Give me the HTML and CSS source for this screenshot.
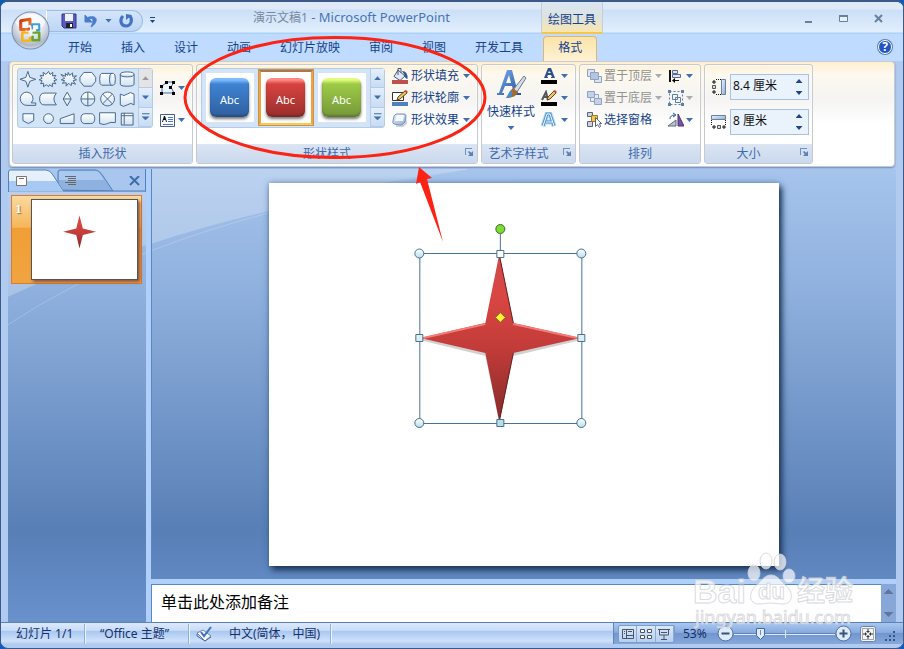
FILE: index.html
```html
<!DOCTYPE html>
<html lang="zh-CN">
<head>
<meta charset="utf-8">
<title>演示文稿1 - Microsoft PowerPoint</title>
<link rel="stylesheet" href="styles.css">
</head>
<body>
<svg class="defs" aria-hidden="true">
  <defs>
    <linearGradient id="shapeFill" x1="0" y1="0" x2="0" y2="1"><stop offset="0" stop-color="#fff"/><stop offset="1" stop-color="#d3e3f3"/></linearGradient>
    <linearGradient id="steel" x1="0" y1="0" x2="1" y2="1"><stop offset="0" stop-color="#eef5fd"/><stop offset="1" stop-color="#8aa9d3"/></linearGradient>
    <linearGradient id="redStar" x1="0" y1="0" x2="0" y2="1"><stop offset="0" stop-color="#cf4a4a"/><stop offset=".25" stop-color="#d94643"/><stop offset=".55" stop-color="#c33c39"/><stop offset="1" stop-color="#852a2a"/></linearGradient>
    <radialGradient id="orb" cx=".5" cy=".3" r=".75"><stop offset="0" stop-color="#fff"/><stop offset=".5" stop-color="#dfe3ec"/><stop offset=".8" stop-color="#b0b8c8"/><stop offset="1" stop-color="#e8edf5"/></radialGradient>
    <linearGradient id="handle" x1="0" y1="0" x2="0" y2="1"><stop offset="0" stop-color="#fff"/><stop offset="1" stop-color="#b4dfea"/></linearGradient>
    <linearGradient id="letter" x1="0" y1="0" x2="1" y2="1"><stop offset="0" stop-color="#7fb0ea"/><stop offset="1" stop-color="#1f4f9f"/></linearGradient>
    <linearGradient id="ember" x1="0" y1="0" x2="1" y2="1"><stop offset="0" stop-color="#c8380f"/><stop offset="1" stop-color="#f58a3c"/></linearGradient>
  </defs>
</svg>
<div class="window">
  <header class="top">
    <button class="office" aria-label="Office 按钮">
      <svg viewBox="0 0 38 38"><circle cx="19" cy="19" r="18" fill="url(#orb)" stroke="#7f8fab"/><ellipse cx="19" cy="11" rx="14" ry="8" fill="#fff" opacity=".65"/>
        <g fill="none" stroke-linejoin="round"><path d="M17 18h-7.500V9.500l9-1.500v6" stroke="url(#ember)" stroke-width="3"/><path d="M20.500 18v-5h7v5.500h-3" stroke="#3f9fdc" stroke-width="2"/><path d="M17 21h-6v8h7.500v-4" stroke="#f6b51d" stroke-width="2.500"/><path d="M21 21h6.500v7.500H21V24" stroke="#69a52b" stroke-width="2.500"/><path d="M19.500 15v9M14 19.500h10" stroke="#fff"/><path d="M17.500 16v2h-2" stroke="#e85a1c" stroke-width="2"/></g></svg>
    </button>
    <div class="titlebar">
      <div class="title-left">
        <div class="qat">
          <button aria-label="保存"><svg width="16" height="16"><path d="M1 1h14v14H3l-2-2z" fill="#5a5bc0" stroke="#33348f"/><path d="M4 1h8v7H4z" fill="#eef1fa"/><path d="M5 10h7v5H5z" fill="#222"/><path d="M9 11h2v3H9z" fill="#fff"/></svg></button>
          <button aria-label="撤消"><svg width="16" height="16"><path d="M2 2v7h7L6.600 6.600C9 4 12 6 8 14c7-4 8-13-3.500-9.500z" fill="#4a7ccd" stroke="#4a7ccd" stroke-linejoin="round"/></svg></button>
          <span class="arrow dim"></span>
          <button aria-label="恢复"><svg width="16" height="16"><path d="M5 3C1 7 3 13 8 13s7-6 4-10" fill="none" stroke="#4273c4" stroke-width="3"/><path d="M8 1v6L14 2z" fill="#4273c4"/></svg></button>
        </div>
        <button class="more" aria-label="自定义快速访问工具栏"><svg width="7" height="7"><path d="M1 .5h5" stroke="#24446f"/><path d="M1 3h5L3.500 6z" fill="#24446f"/></svg></button>
        <h1><span>演示文稿1</span> - Microsoft PowerPoint</h1>
      </div>
      <div class="context">绘图工具</div>
      <div class="controls">
        <button aria-label="最小化"><svg width="11" height="11"><path d="M2 9h7" stroke="#68809f" stroke-width="2"/></svg></button>
        <button aria-label="最大化"><svg width="11" height="11"><path d="M1.500 2.500h8v6h-8z" fill="#e6f0fb" stroke="#68809f"/><path d="M1 3h9" stroke="#68809f" stroke-width="2"/></svg></button>
        <button aria-label="关闭"><svg width="11" height="11"><path d="M2 2l7 7M9 2L2 9" stroke="#68809f" stroke-width="2"/></svg></button>
      </div>
    </div>
    <nav class="tabs">
      <a href="#">开始</a><a href="#">插入</a><a href="#">设计</a><a href="#">动画</a><a href="#">幻灯片放映</a><a href="#">审阅</a><a href="#">视图</a><a href="#">开发工具</a><a href="#" class="active" aria-current="page">格式</a>
      <button class="help" aria-label="帮助">?</button>
    </nav>
  </header>

  <section class="ribbon">
    <div class="group g-shapes">
      <div class="body">
        <div class="gallery">
          <svg class="shapes" width="120" height="58" viewBox="0 0 122 58" fill="url(#shapeFill)" stroke="#45688f" stroke-width="1">
            <path d="M10 2l2 6 6 2-6 2-2 6-2-6-6-2 6-2z"/>
            <path d="M31 2l1.500 3 3-2-.5 3.500 3.500-.5-2 3 3 1.500-3 1 2 3-3.500-.5v3.500l-3-2-1 2-2-2-3 2v-3.500l-3 .5 1.500-3-3-1 3-1.500-2-3 3.500.5-.5-3.500 3 2z"/>
            <path d="M51 3l1.500 3 3-2.500v3.500l4-.5-3 2.500 3 1.500-3.500 1 2.500 3.500-4-1.500-.500 3-2.500-2.500-2.500 3v-3.500l-4 .5 2.500-2.500-3.500-1 3.500-1.500-4-4 5 2-.500-3 2.500 2z"/>
            <path d="M67 3h8l4 5v4l-4 5h-8l-4-5V8z"/>
            <path d="M85 4h12q2 0 2 6t-2 6H85q-2 0-2-6t2-6zM95 4q-2 0-2 6t2 6"/>
            <path d="M104 5v10q0 2 7 2t7-2V5M104 5q0-2.500 7-2.500T118 5t-7 2.500T104 5z"/>
            <path d="M9 23a6.500 6.500 0 1 0 0 13.500h9v-2.500h-4.500A6.500 6.500 0 0 0 9 23z"/>
            <path d="M27 24h12q-5 6 0 12H27q-5 0-5-6t5-6z"/>
            <path d="M50 23l4 7-4 7-4-7zM46 30h8"/>
            <path d="M71 23a7 7 0 1 0 .1 0M64 30h14M71 23v14"/>
            <path d="M91 23a7 7 0 1 0 .1 0M86 25l10 10M96 25L86 35"/>
            <path d="M104 25q4 3 7 0t7 0v11q-3-3-7 0t-7 0z"/>
            <path d="M5 45h11v7l-5.500 3L5 52z"/><circle cx="31" cy="50" r="5"/>
            <path d="M43 50l14-5v10H43z"/><path d="M68 45h6q4 0 4 5t-4 5h-6q-4 0-4-5t4-5z"/>
            <path d="M83 44h16v10q-5-1-8 1t-8 0z"/><path d="M105 44.500h12v12h-12zM108 44v12M105 47h12"/>
          </svg>
          <div class="scroller"><button class="off" aria-label="上一行"><i class="arrow up"></i></button><button aria-label="下一行"><i class="arrow"></i></button><button aria-label="其他"><i class="arrow bar"></i></button></div>
        </div>
        <div class="stack edit">
          <button aria-label="编辑形状"><svg width="16" height="16"><path d="M2 13V6l5-4h7l-3 5 3 6z" fill="#eef5fd" stroke="#3a6ab0"/><path d="M0 5h3v3H0zM5 1h3v3H5zM12 1h3v3h-3zM9 6h3v3H9zM0 12h3v3H0zM12 12h3v3h-3z"/></svg><i class="arrow"></i></button>
          <button aria-label="文本框"><svg width="16" height="16"><path d="M.5 2.500h14v12H.5z" fill="#f6faff" stroke="#4d5d78"/><path d="M2 10l2-6h1l2 6H6L5.500 8h-2L3 10z" fill="#111"/><path d="M8 5.500h5M8 7.500h5M8 9.500h5M3 12.500h10" stroke="#4a7ac0"/></svg><i class="arrow"></i></button>
        </div>
      </div>
      <h2>插入形状</h2>
    </div>

    <div class="group g-styles">
      <div class="body">
        <div class="gallery">
          <div class="thumbs"><button class="blue"><span>Abc</span></button><button class="red selected" aria-pressed="true"><span>Abc</span></button><button class="green"><span>Abc</span></button></div>
          <div class="scroller"><button aria-label="上一行"><i class="arrow up"></i></button><button aria-label="下一行"><i class="arrow"></i></button><button aria-label="其他"><i class="arrow bar"></i></button></div>
        </div>
        <div class="stack">
          <button><svg width="16" height="16"><path d="M6 2l7 6-5 4.500-6-4z" fill="#dfe9f8" stroke="#475a7d"/><path d="M6 7V.5h3V5" fill="none" stroke="#475a7d"/><path d="M10 3q6 0 5.500 8-3-1-3-4z" fill="#29579c"/><path d="M0 12h16v4H0z" fill="#c0504d"/></svg>形状填充<i class="arrow"></i></button>
          <button><svg width="16" height="16"><path d="M.5 2.500h11v8H.5z" fill="#fff" stroke="#333"/><path d="M5 10l1-3 7-6 2 2-7 6z" fill="#f2c75b" stroke="#5b4520"/><path d="M12 1l2-1 2 2-1 1z" fill="#c9463d"/><path d="M0 12h16v4H0z" fill="#4f81bd"/></svg>形状轮廓<i class="arrow"></i></button>
          <button><svg width="16" height="16"><path d="M5 4h9l1 8-4 3H4z" fill="#9aa3b5" opacity=".5"/><path d="M4 2h8q2 0 2 2l-1 6q-3 4-5 3l-6-1q-2-1-1-3l1-5z" fill="url(#steel)" stroke="#7894bf"/><path d="M5 3h7l-1 6H3z" fill="#f7fbff"/></svg>形状效果<i class="arrow"></i></button>
        </div>
      </div>
      <h2>形状样式<button class="launch" aria-label="形状样式对话框"></button></h2>
    </div>

    <div class="group g-wordart">
      <div class="body">
        <button class="quick"><svg width="32" height="32"><path d="M2 25h2L12 2h5l6 23h3v2h-9v-2h2l-2-7h-7l-3 7h2v2H2zM11 15h5l-2-8z" fill="url(#letter)"/><path d="M29 8l2 2-9 14-4-2z" fill="#d5dde8" stroke="#6c7888"/><path d="M18 20l5 4q-2 6-12 6 3-3 4-7z" fill="#a66a2c"/><path d="M11 30l4-7 3 1-2 5z" fill="#3e8edc"/></svg>快速样式<i class="arrow"></i></button>
        <div class="stack">
          <button aria-label="文本填充"><svg width="16" height="16"><path d="M3 10L7 0h3l4 10h-4V9h1l-1-2H7L6 9h1v1zM7 5h3L8 3z" fill="#2c5087"/><path d="M0 12h16v4H0z"/></svg><i class="arrow"></i></button>
          <button aria-label="文本轮廓"><svg width="16" height="16"><path d="M1 10L5 2l2 8M3 7h4" fill="none" stroke="#555" stroke-width="2"/><path d="M6 10l1-3 6-6 2 2-6 6z" fill="#f2c75b" stroke="#5b4520"/><path d="M12 1l2-1 2 2-1 1z" fill="#c9463d"/><path d="M0 12h16v4H0z"/></svg><i class="arrow"></i></button>
          <button aria-label="文本效果"><svg width="16" height="16"><path d="M2 14L6 2h3l4 12M5 10h6" fill="none" stroke="#8fd0f2" stroke-width="5" opacity=".7"/><path d="M2 14L6 2h3l4 12M5 10h6" fill="none" stroke="#5a93cf" stroke-width="3"/><path d="M2 14L6 2h3l4 12M5 10h6" fill="none" stroke="#eefaff"/></svg><i class="arrow"></i></button>
        </div>
      </div>
      <h2>艺术字样式<button class="launch" aria-label="艺术字样式对话框"></button></h2>
    </div>

    <div class="group g-arrange">
      <div class="body">
        <div class="stack">
          <button disabled><svg width="16" height="16" fill="#dde5f1" stroke="#8fa2c2"><path d="M1.500 1.500h7v7h-7zM8.500 8.500h7v6h-7z"/><path d="M4.500 4.500h8v7h-8z" fill="#b5c5df"/></svg>置于顶层<i class="arrow"></i></button>
          <button disabled><svg width="16" height="16" fill="#c4d1e6" stroke="#8fa2c2"><path d="M4.500 4.500h8v7h-8z" fill="#e8edf5"/><path d="M1.500 1.500h7v6h-7zM8.500 8.500h7v6h-7z"/></svg>置于底层<i class="arrow"></i></button>
          <button><svg width="16" height="16" stroke="#56657e"><path d="M1.500.5h5v4h-5zM1.500 9.500h5v5h-5z" fill="#ccd3df"/><path d="M5.500 3.500h6v6h-6z" fill="#f5c451" stroke="#a5781d"/><path d="M9.500 5.500v9l2-2 2 3 1-1-1-3h2z" fill="#fff"/></svg>选择窗格</button>
        </div>
        <div class="stack">
          <button aria-label="对齐"><svg width="16" height="16"><path d="M2 2v12" stroke="#111" stroke-width="2"/><path d="M4.500 2.500h5v3h-5zM4.500 6.500h8v3h-8z" fill="#dce6f4" stroke="#586b88"/><path d="M5 12.500h6" stroke="#111"/><path d="M4 12.500l3-2.500v5z"/></svg><i class="arrow"></i></button>
          <button disabled aria-label="组合"><svg width="16" height="16" fill="none" stroke="#5d7fa9"><path d="M1.500 1.500h13v13h-13z" stroke-dasharray="2 2"/><path d="M4.500 4.500h5v5h-5zM7.500 7.500h5v5h-5z"/><path d="M0 0h3v3H0zM13 0h3v3h-3zM0 13h3v3H0zM13 13h3v3h-3z" fill="#5d7fa9" stroke="none"/></svg><i class="arrow"></i></button>
          <button aria-label="旋转"><svg width="16" height="16"><path d="M0 14l8-6v6z" fill="#b9c3cc" stroke="#5d6c7c"/><path d="M10 2v12h6z" fill="#7752a0" stroke="#4d3474"/><path d="M2 7q0-4 5-4M5 1l3 2-3 2" fill="none" stroke="#315b98"/></svg><i class="arrow"></i></button>
        </div>
      </div>
      <h2>排列</h2>
    </div>

    <div class="group g-size">
      <div class="body">
        <div class="field"><label for="h" aria-label="高度"><svg width="16" height="16"><path d="M10.500.5h4v15h-4z" fill="url(#steel)" stroke="#6b7fa3"/><path d="M1.500 6.500h3v3h-3z" fill="#ddd" stroke="#555"/><path d="M3 1v4M1 3h4M3 11v4M1 13h4" stroke="#111"/><path d="M5 .5h5M5 15.500h5" stroke="#111" stroke-dasharray="1 1"/></svg></label><div class="spin"><input id="h" type="text" value="8.4 厘米"><button aria-label="增加高度"><i class="arrow up"></i></button><button aria-label="减少高度"><i class="arrow"></i></button></div></div>
        <div class="field"><label for="w" aria-label="宽度"><svg width="16" height="16"><path d="M.5 1.500h14v4H.5z" fill="url(#steel)" stroke="#6b7fa3"/><path d="M6.500 11.500h3v3h-3z" fill="#ddd" stroke="#555"/><path d="M1 13h4M3 11v4M11 13h4M13 11v4" stroke="#111"/><path d="M.5 6v5M14.500 6v5" stroke="#111" stroke-dasharray="1 1"/></svg></label><div class="spin"><input id="w" type="text" value="8 厘米"><button aria-label="增加宽度"><i class="arrow up"></i></button><button aria-label="减少宽度"><i class="arrow"></i></button></div></div>
      </div>
      <h2>大小<button class="launch" aria-label="大小对话框"></button></h2>
    </div>
  </section>

  <main class="work">
    <svg class="waves" viewBox="0 0 888 454" preserveAspectRatio="none" aria-hidden="true"><path d="M0 0H460Q370 12 261 42Q200 56 143 75Q60 100 0 128z" fill="#fff" opacity=".24"/><path d="M0 156Q60 116 143 82Q200 60 261 44Q380 12 460 0" fill="none" stroke="#fff" opacity=".2"/></svg>
    <aside class="outline">
      <div class="pane-tabs">
        <svg viewBox="0 0 138 23" preserveAspectRatio="none" aria-hidden="true"><path d="M0 0h138v22H0z" fill="#a9c6ee"/><path d="M50 21V3q0-2 2-2h36q3 0 7 6l10 15z" fill="#8fb1e0" stroke="#4f81be"/><path d="M51 3q0-1 1-1h36q3 0 8 9H51z" fill="#abc8f0"/><path d="M.5 23V3q0-2 2-2H38q4 0 7 5l10 16h83V23z" fill="#e6f0fd" stroke="#4f81be"/><path d="M1 12h47l7 10H1z" fill="#a8c9f4"/><path d="M137.500 0v22" stroke="#4f81be"/></svg>
        <button class="p1" aria-label="幻灯片"><svg width="11" height="10"><path d="M.5.5h10v9H.5z" fill="#fff" stroke="#777"/><path d="M3 2.500h5" stroke="#777"/></svg></button>
        <button class="p2" aria-label="大纲"><svg width="11" height="10"><path d="M0 .5h11M3 2.500h8M3 4.500h8M0 6.500h11M3 8.500h8" stroke="#666"/></svg></button>
        <button class="p3" aria-label="关闭"><svg width="11" height="10"><path d="M1 0l9 9M10 0L1 9" stroke="#3e6ea8" stroke-width="2"/></svg></button>
      </div>
      <button class="thumb" aria-label="幻灯片 1"><b>1</b><svg viewBox="0 0 510 383"><path fill="url(#redStar)" d="M230.500 75L247 139l64 15.500-64 15.500-16.500 65L215 170l-64-15.500L215 139z"/></svg></button>
    </aside>
    <div class="content">
      <div class="editor">
        <div class="slide">
          <svg viewBox="0 0 510 383">
            <path d="M230 73l14 70 68 14-68 16-14 67-14-67-66-16 66-14z" fill="#000" opacity=".18"/>
            <path fill="url(#redStar)" d="M230 71l14 69 67 15-67 15-14 69-14-69-65-15 65-15z"/>
            <path d="M154 155l62-14M308 155l-64-14" stroke="#f37b78" stroke-width="2"/><path d="M230 72l14 68M244 170l-14 68" stroke="#64211f"/>
            <path d="M150.500 70.500h162v170h-162zM231 51v16" fill="none" stroke="#47719f"/>
            <g fill="url(#handle)" stroke="#4f6f87"><circle cx="150" cy="70.500" r="4.500"/><circle cx="312" cy="70.500" r="4.500"/><circle cx="150" cy="240" r="4.500"/><circle cx="312" cy="240" r="4.500"/><path d="M227.500 67.500h7v7h-7zM227.500 236.500h7v7h-7zM146.500 151.500h7v7h-7zM308.500 151.500h7v7h-7z"/></g>
            <circle cx="231" cy="46" r="4.500" fill="#7be02c" stroke="#41643b"/><path d="M231 129.500l5 5-5 5-5-5z" fill="#fdf22f" stroke="#80642c"/>
          </svg>
        </div>
      </div>
      <div class="notes"><p>单击此处添加备注</p><div class="nscroll"><button aria-label="向上"><i class="arrow up"></i></button><button aria-label="向下"><i class="arrow"></i></button></div></div>
    </div>
  </main>

  <footer class="status">
    <span class="s1">幻灯片 1/1</span><span class="s2">“Office 主题”</span>
    <span class="s3"><svg width="18" height="16"><path d="M1 7l6-3 8 6-6 5z" fill="#f5f8fd" stroke="#6e84aa"/><path d="M1 8v2l8 5 6-4" fill="none" stroke="#4e6a9c"/><path d="M5 6l3 4 7-9" fill="none" stroke="#3c71bd" stroke-width="2"/></svg>中文(简体，中国)</span>
    <div class="right">
      <div class="views">
        <button aria-label="普通视图"><svg width="12" height="12"><path d="M.5 1.500h11v9H.5zM4.500 1v9M4 7.500h7M2 3.500h1M2 5.500h1M6 3.500h4" fill="none" stroke="#4b5566"/></svg></button>
        <button aria-label="幻灯片浏览"><svg width="12" height="12"><path d="M.5 1.500h4v3h-4zM7.500 1.500h4v3h-4zM.5 7.500h4v3h-4zM7.500 7.500h4v3h-4z" fill="#fff" stroke="#4b5566"/></svg></button>
        <button aria-label="幻灯片放映"><svg width="12" height="12"><path d="M0 1.500h12M1.500 2v5h9V2M6 7v4M3 11.500h6M3 4.500h6" fill="none" stroke="#4b5566"/></svg></button>
      </div>
      <output>53%</output>
      <button class="round" aria-label="缩小"><svg width="17" height="17"><circle cx="8.500" cy="8.500" r="7.500" fill="#dfeafa" stroke="#4f6d9c"/><path d="M4.500 8.500h8" stroke="#34547f" stroke-width="2"/></svg></button>
      <div class="zoom"><svg viewBox="0 0 101 16"><path d="M0 8.500h101" stroke="#dbe8fb"/><path d="M0 7.500h101" stroke="#6585bb"/><path d="M51.500 4v8" stroke="#dbe8fb"/><path d="M22.500 2.500h8v7l-4 4-4-4z" fill="#dfeafa" stroke="#4068a4"/><path d="M26.500 4v5" stroke="#6f8fbf"/></svg><input type="range" min="10" max="400" value="53" aria-label="显示比例"></div>
      <button class="round" aria-label="放大"><svg width="17" height="17"><circle cx="8.500" cy="8.500" r="7.500" fill="#dfeafa" stroke="#4f6d9c"/><path d="M4.500 8.500h8M8.500 4.500v8" stroke="#34547f" stroke-width="2"/></svg></button>
      <button class="fit" aria-label="使幻灯片适应当前窗口"><svg width="16" height="16"><rect x=".5" y=".5" width="15" height="15" rx="2" fill="#f4f6f9" stroke="#6682ad"/><path d="M2.500 2.500h11v11h-11z" fill="none" stroke="#555" stroke-dasharray="1 1"/><path d="M8 3v3M8 10v3M3 8h3M10 8h3" stroke="#333"/><path d="M6 5h4L8 7zM6 11h4L8 9zM5 6v4l2-2zM11 6v4L9 8z" fill="#333"/></svg></button>
      <svg class="grip" width="12" height="12" fill="#36578c"><path d="M8 0h2v2H8zM4 4h2v2H4zM8 4h2v2H8zM0 8h2v2H0zM4 8h2v2H4zM8 8h2v2H8z"/></svg>
    </div>
  </footer>

  <svg class="overlay" width="904" height="649" viewBox="0 0 904 649">
    <ellipse cx="335" cy="97.500" rx="150" ry="60" fill="none" stroke="#fb2313" stroke-width="3"/>
    <path d="M419 167l13 11-5 1 16 63-23-60-4 2z" fill="#fb2313"/>
    <g class="mark">
      <text x="693" y="603" class="m1">Bai</text>
      <path d="M771 575c6 0 9 5 13 9 10 7 10 20-1 20-5 0-8-1-12-1s-7 1-12 1c-11 0-11-13-1-20 4-4 7-9 13-9z"/>
      <ellipse cx="754" cy="573" rx="6" ry="8"/><ellipse cx="766" cy="561" rx="6" ry="8"/><ellipse cx="780" cy="562" rx="6" ry="8"/><ellipse cx="789" cy="576" rx="6" ry="7"/>
      <text x="758" y="599" class="m2">du</text><text x="797" y="601" class="m3">经验</text><text x="695" y="624" class="m4">jingyan.baidu.com</text>
    </g>
  </svg>
</div>
</body>
</html>
```
FILE: styles.css
```css
* { box-sizing: border-box; }
body { margin: 0; background: #0a5cc0; font: 12px/16px "Noto Sans", "Noto Sans CJK SC", sans-serif; color: #15428b; }
button { padding: 0; border: 0; background: none; font: inherit; color: inherit; }
svg { display: block; flex: none; }
h1, h2, p { margin: 0; font: inherit; }
a { color: inherit; text-decoration: none; }
.defs { position: absolute; width: 0; height: 0; }
.window { position: relative; display: flex; flex-direction: column; height: 100vh; overflow: hidden; border: 1px solid #3b5a8a; border-top-width: 2px; border-radius: 8px; background: #b1cbf0; }

.arrow { flex: none; width: 7px; height: 4px; background: #3f6fb2; clip-path: polygon(0 0, 100% 0, 50% 100%); }
.arrow.up { clip-path: polygon(50% 0, 100% 100%, 0 100%); }
.arrow.bar { width: 8px; height: 7px; clip-path: polygon(0 0, 100% 0, 100% 15%, 0 15%, 0 45%, 100% 45%, 50% 100%, 0 45%); }

.top { position: relative; background: #bfdbff; }
.office { position: absolute; z-index: 2; left: 10px; top: 9px; width: 39px; height: 39px; }
.titlebar { display: flex; height: 32px; background: linear-gradient(#dfe9f8 0 7px, #cbdff7 8px, #e2effd 30px, #a9d1fa 31px); }
.title-left { display: flex; align-items: center; flex: 0 0 540px; padding: 5px 0 0 45px; }
.qat { display: flex; align-items: center; gap: 6px; width: 97px; height: 22px; padding-left: 14px; border: 1px solid #9fbde4; border-left-color: #fff; border-radius: 0 11px 11px 0; background: linear-gradient(#d4e5fa, #bdd5f5); }
.more { margin: 0 97px 0 6px; }
.title-left h1 { padding-bottom: 6px; font-size: 13px; color: #4874b6; white-space: nowrap; }
.title-left h1 span { font-size: 12px; color: #77879f; }
.context { flex: 0 0 62px; padding: 10px 0 0; border: solid #c3cfd8; border-width: 0 1px; border-bottom: 2px solid #f3c64e; background: linear-gradient(#d9e6f4, #dde3df 50%, #f8e6b0); text-align: center; }
.controls { display: flex; gap: 24px; margin: 11px 19px 0 auto; height: 11px; }
.tabs { display: flex; height: 27px; padding-left: 53px; gap: 1px; line-height: 27px; }
.tabs a { padding: 0 14px; }
.tabs .active { margin: 2px 0 0 5px; border: 1px solid #d9b878; border-bottom: 0; border-radius: 4px 4px 0 0; background: linear-gradient(#fbe3a8, #fef2d5); line-height: 22px; }
.help { width: 14px; height: 14px; margin: 6px 11px 0 auto; border: 1px solid #fff; border-radius: 50%; background: #2355c4; box-shadow: 0 0 0 1px #5b7fb8; color: #fff; font-weight: 700; line-height: 12px; }

.ribbon { display: flex; gap: 3px; height: 106px; margin: 0 8px; padding: 2px; border: 1px solid #c9cbd0; border-radius: 4px; background: linear-gradient(#feefcf, #fdf9ef 12%, #f5f4f2 35%, #fff 60%); box-shadow: 0 1px 2px #6488bb; }
.group { display: flex; flex-direction: column; border: 1px solid #c6c9cf; border-radius: 3px; box-shadow: inset 0 0 0 1px #fff8; }
.g-shapes { flex: 0 0 181px; } .g-styles { flex: 0 0 282px; } .g-wordart { flex: 0 0 95px; } .g-arrange { flex: 0 0 122px; } .g-size { flex: 0 0 109px; }
.body { display: flex; flex: 1; min-height: 0; padding: 3px 4px; }
.group h2 { display: flex; justify-content: center; position: relative; height: 19px; line-height: 20px; background: linear-gradient(#dbe5f3, #cad9ee); color: #3e6aaa; }
.g-wordart h2, .g-size h2, .g-styles h2 { padding-right: 20px; }
.launch { position: absolute; right: 5px; top: 4px; width: 7px; height: 7px; border: solid #6f91bd; border-width: 1px 0 0 1px; }
.launch::after { content: ""; position: absolute; left: 2px; top: 2px; width: 5px; height: 5px; background: #5c80b0; clip-path: polygon(100% 0, 100% 100%, 0 100%, 35% 65%, 0 20%, 20% 0, 65% 35%); }
.gallery { display: flex; height: 60px; border: 1px solid #b4cce8; border-radius: 3px; background: #d3e4f6; }
.scroller { display: flex; flex-direction: column; width: 14px; border-left: 1px solid #b4cce8; }
.scroller button { display: flex; flex: 1; align-items: center; justify-content: center; border-bottom: 1px solid #b4cce8; background: linear-gradient(#e4effb, #c8dcf4); }
.scroller .off { background: #e4e4e4; }
.scroller .off .arrow { background: #999; }
.stack { display: flex; flex-direction: column; }
.stack button { display: flex; align-items: center; height: 22px; gap: 3px; white-space: nowrap; }
.stack button[disabled] { color: #92928f; }
.stack button[disabled] .arrow { background: #a8acb2; }
.stack .arrow { margin-left: 1px; }
.g-styles .stack { margin: -3px 0 0 7px; }
.edit { gap: 10px; margin: 9px 0 0 7px; }
.edit .arrow { margin-left: -1px; }
.thumbs { display: flex; }
.thumbs button { width: 56px; height: 57px; padding: 4px; border: 4px solid #d3e4f6; background: #fff; }
.thumbs .selected { padding: 5px; border: 3px solid #f2a23e; border-top-color: #ae7747; border-bottom-color: #fbcb51; outline: 1px solid #c7934d; outline-offset: -1px; box-shadow: inset 0 0 0 1px #fff; }
.thumbs span { display: block; height: 39px; width: 39px; border-radius: 6px; color: #fff; font-size: 11px; line-height: 43px; box-shadow: 0 2px 3px #0008, inset 0 -2px 2px #0003; }
.blue span { background: linear-gradient(#7fbcff 0 2px, #3f83d3 6px, #2f5f9f); }
.red span { background: linear-gradient(#ff8985 0 2px, #d8423f 6px, #982f2d); }
.green span { background: linear-gradient(#e1fb7e 0 2px, #9dcb46 6px, #759739); }
.quick { display: flex; flex-direction: column; align-items: center; width: 50px; white-space: nowrap; }
.quick svg { margin: 3px 0 4px; }
.quick .arrow { margin-top: 6px; }
.g-wordart .body { padding: 0 4px; }
.g-wordart .stack { margin-left: 5px; }
.g-arrange .body { padding: 0 6px; gap: 6px; }
.g-arrange .stack:last-child .arrow { margin-left: 0; }
.g-arrange .stack button { gap: 2px; }
.g-size .body { flex-direction: column; gap: 9px; padding: 9px 3px 0 6px; }
.field { display: flex; align-items: center; gap: 3px; }
.spin { display: grid; grid-template: 12px 12px / 1fr 18px; flex: 1; border: 1px solid #a9c1e3; background: #eaf2fc; }
.spin input { grid-row: 1 / 3; min-width: 0; width: 100%; padding: 0 2px 3px; border: 0; background: none; color: #111; font: inherit; }
.spin button { display: flex; align-items: center; justify-content: center; }
.spin .arrow { background: #1f4788; }

.work { position: relative; display: flex; flex: 1; min-height: 0; margin: 2px 7px 0; background: linear-gradient(#a6c4ec, #91b2df 25%, #587fb6 80%, #6991cc); }
.waves { position: absolute; inset: 0; width: 100%; height: 100%; }
.outline { position: relative; flex: 0 0 138px; }
.pane-tabs { display: grid; grid-template-columns: 49px 60px 1fr; height: 23px; align-items: center; }
.pane-tabs > svg { grid-area: 1 / 1 / 2 / 4; width: 100%; height: 23px; }
.pane-tabs button { position: relative; grid-row: 1; }
.pane-tabs .p1 { grid-column: 1; padding-left: 8px; } .pane-tabs .p2 { grid-column: 2; padding-left: 8px; } .pane-tabs .p3 { grid-column: 3; padding-left: 12px; }
.thumb { display: flex; align-items: flex-start; width: 131px; margin: 3px 0 0 3px; padding: 3px 3px 3px 0; border: 1px solid #dd7b2b; background: linear-gradient(#fbd9a0, #f5b659 36%, #f09f35 37%, #f0a440); }
.thumb b { flex: 1; padding: 3px 6px 0 0; color: #fff; font: 700 12px/14px "Liberation Serif", serif; text-shadow: 1px 1px 1px #865; }
.thumb svg { width: 107px; border: 1px solid #555; background: #fff; box-shadow: 2px 2px 3px #854; }
.content { position: relative; display: flex; flex: 1; flex-direction: column; min-width: 0; border-left: 5px solid #b1d0f9; }
.editor { display: grid; flex: 1; min-height: 0; place-items: center; border-left: 1px solid #5788c4; }
.slide { height: calc(100% - 27px); aspect-ratio: 4 / 3; background: #fff; box-shadow: 3px 4px 6px #1d3558, 0 0 6px #36588a88; }
.slide svg { width: 100%; height: 100%; }
.notes { display: flex; height: 43px; border-top: 5px solid #b1d0f9; background: #fff; }
.notes p { flex: 1; padding: 4px 9px; border: solid #5788c4; border-width: 1px 0 0 1px; color: #000; font: 16px/24px "Noto Sans CJK SC", sans-serif; }
.nscroll { display: flex; flex-direction: column; justify-content: space-between; align-items: center; width: 15px; padding: 5px 0; background: #86a7d7; }
.nscroll .arrow { display: block; width: 10px; height: 5px; background: #63759b; }

.status { display: flex; height: 22px; margin-bottom: 4px; align-items: center; border-top: 1px solid #5a83bb; background: linear-gradient(#dbe9fc, #c9dcf7 35%, #a9c8f1 40%, #cfe1fa 85%, #b4cef2); color: #15306a; }
.status > span { display: flex; align-items: center; height: 20px; border-right: 1px solid #90afd9; box-shadow: 1px 0 #eaf3ff; white-space: nowrap; }
.s1 { flex: 0 0 84px; padding-left: 15px; } .s2 { flex: 0 0 104px; padding-left: 15px; } .s3 { flex: 0 0 142px; padding-left: 7px; gap: 15px; }
.right { display: flex; align-items: center; height: 21px; margin-left: auto; padding: 0 6px 0 4px; border-left: 1px solid #6584b5; background: linear-gradient(#a9c7f1, #88aade 45%, #7296ce 50%, #86a8dc); }
.views { display: flex; width: 57px; height: 18px; border: 1px solid #7d9bc9; border-radius: 2px; background: linear-gradient(#d9e7f9, #b7cff0); }
.views button { display: grid; flex: 1; place-items: center; border-right: 1px solid #8faad2; }
.right output { width: 42px; padding-left: 8px; }
.zoom { display: grid; width: 101px; }
.zoom > * { grid-area: 1 / 1; width: 100%; margin: 0; }
.zoom input { appearance: none; height: 16px; background: none; }
.zoom input::-webkit-slider-thumb { appearance: none; width: 10px; height: 14px; background: none; }
.fit { margin-left: 8px; }
.grip { margin: 6px 0 0 9px; }

.overlay { position: absolute; left: -1px; top: -2px; pointer-events: none; }
.mark { fill: #fff; fill-opacity: .7; stroke: #cfd1d5; stroke-opacity: .8; stroke-width: 1; }
.m1 { font: 700 34px "Liberation Sans", sans-serif; }
.m2 { font: 700 22px "Liberation Sans", sans-serif; }
.m3 { font: 700 28px "Noto Sans CJK SC", sans-serif; }
.m4 { font: 18px "Noto Sans", sans-serif; }
```
